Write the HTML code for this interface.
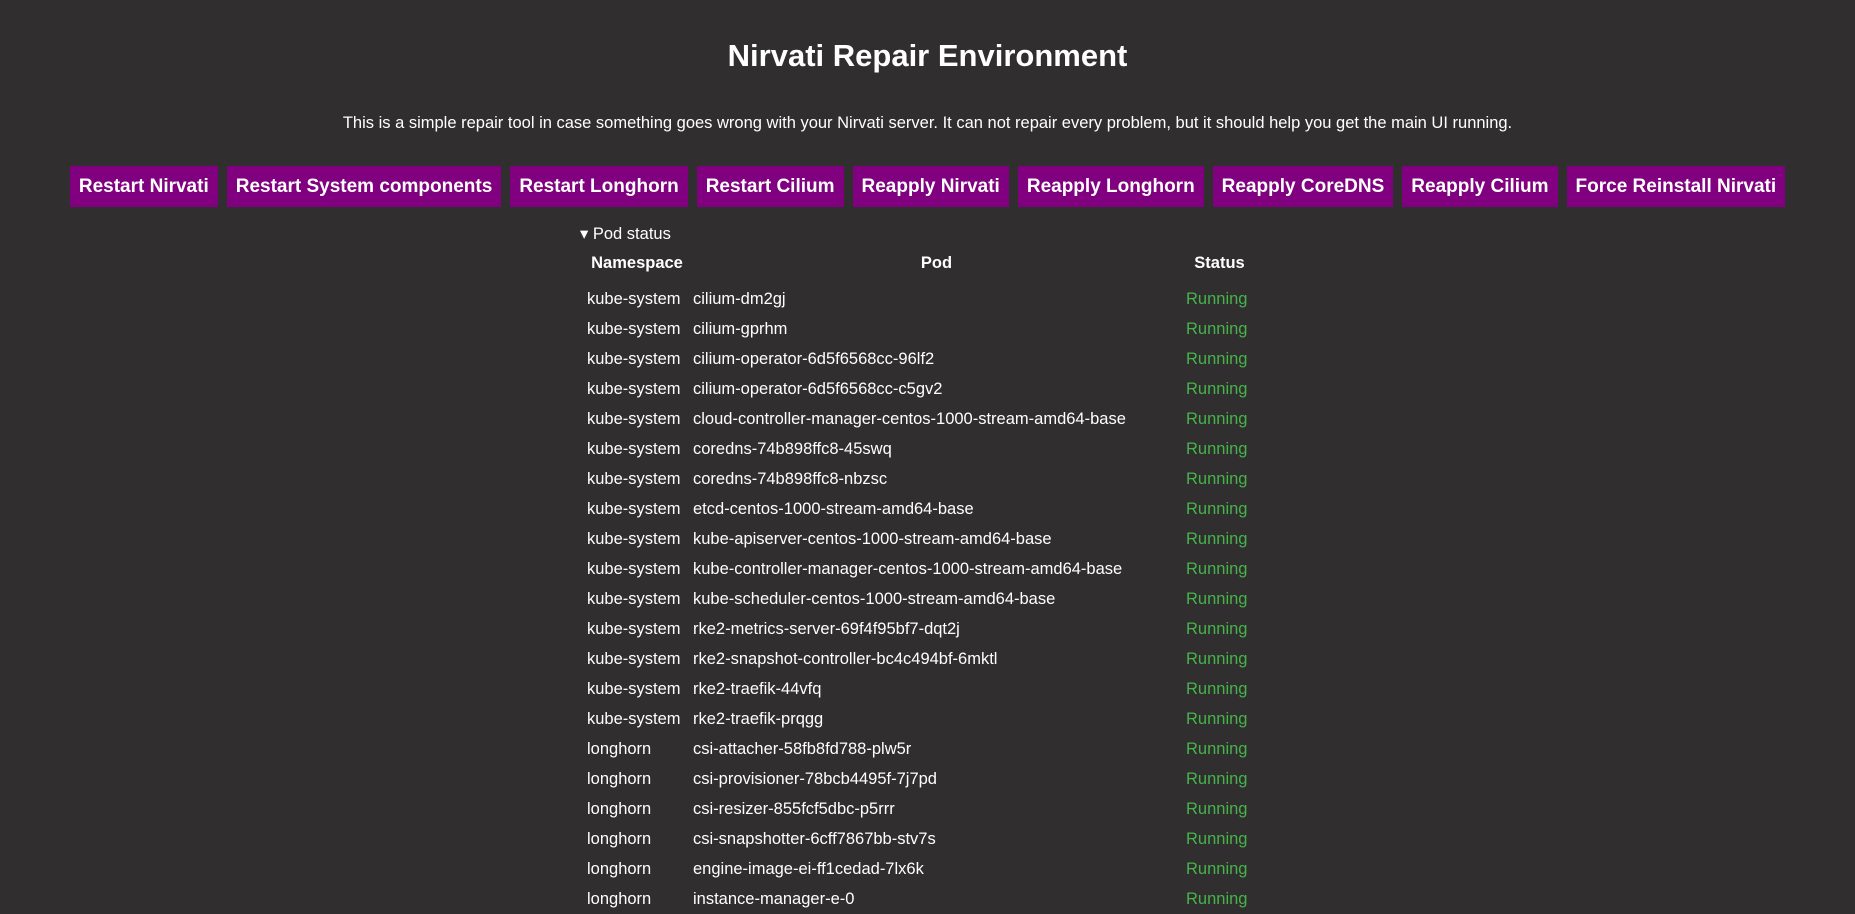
<!DOCTYPE html>
<html><head><meta charset="utf-8"><style>
html,body{margin:0;padding:0;background:#302e2f;color:#fff;font-family:"Liberation Sans",Arial,sans-serif;width:1855px;height:875px;overflow:hidden}
h1{margin:0;position:absolute;top:37px;left:0;width:1855px;text-align:center;font-size:31px;line-height:38px;font-weight:bold}
.sub{position:absolute;top:112px;left:0;width:1855px;text-align:center;font-size:16.5px;line-height:22px}
.btns{position:absolute;top:166px;left:0;width:1855px;display:flex;justify-content:center;gap:9px}
.btns span{background:#800080;color:#fff;font-weight:bold;font-size:19px;height:41px;line-height:41px;padding:0 9px;white-space:nowrap}
.sum{position:absolute;top:223px;left:580px;font-size:16.5px;line-height:22px}
table{position:absolute;top:243px;left:584px;border-collapse:collapse;table-layout:fixed;font-size:16.5px}
th{padding:0;font-weight:bold;text-align:center}
td{height:30px;line-height:30px;padding:0 3px;white-space:nowrap}
col.a{width:106px}col.b{width:493px}col.c{width:73px}
td.s{color:#46b44a;text-align:left;padding-left:3px}
</style></head><body>
<h1>Nirvati Repair Environment</h1>
<div class="sub">This is a simple repair tool in case something goes wrong with your Nirvati server. It can not repair every problem, but it should help you get the main UI running.</div>
<div class="btns"><span>Restart Nirvati</span><span>Restart System components</span><span>Restart Longhorn</span><span>Restart Cilium</span><span>Reapply Nirvati</span><span>Reapply Longhorn</span><span>Reapply CoreDNS</span><span>Reapply Cilium</span><span>Force Reinstall Nirvati</span></div>
<div class="sum">▾ Pod status</div>
<table><colgroup><col class="a"><col class="b"><col class="c"></colgroup>
<tr><th style="height:41px">Namespace</th><th>Pod</th><th>Status</th></tr>
<tr><td>kube-system</td><td>cilium-dm2gj</td><td class="s">Running</td></tr>
<tr><td>kube-system</td><td>cilium-gprhm</td><td class="s">Running</td></tr>
<tr><td>kube-system</td><td>cilium-operator-6d5f6568cc-96lf2</td><td class="s">Running</td></tr>
<tr><td>kube-system</td><td>cilium-operator-6d5f6568cc-c5gv2</td><td class="s">Running</td></tr>
<tr><td>kube-system</td><td>cloud-controller-manager-centos-1000-stream-amd64-base</td><td class="s">Running</td></tr>
<tr><td>kube-system</td><td>coredns-74b898ffc8-45swq</td><td class="s">Running</td></tr>
<tr><td>kube-system</td><td>coredns-74b898ffc8-nbzsc</td><td class="s">Running</td></tr>
<tr><td>kube-system</td><td>etcd-centos-1000-stream-amd64-base</td><td class="s">Running</td></tr>
<tr><td>kube-system</td><td>kube-apiserver-centos-1000-stream-amd64-base</td><td class="s">Running</td></tr>
<tr><td>kube-system</td><td>kube-controller-manager-centos-1000-stream-amd64-base</td><td class="s">Running</td></tr>
<tr><td>kube-system</td><td>kube-scheduler-centos-1000-stream-amd64-base</td><td class="s">Running</td></tr>
<tr><td>kube-system</td><td>rke2-metrics-server-69f4f95bf7-dqt2j</td><td class="s">Running</td></tr>
<tr><td>kube-system</td><td>rke2-snapshot-controller-bc4c494bf-6mktl</td><td class="s">Running</td></tr>
<tr><td>kube-system</td><td>rke2-traefik-44vfq</td><td class="s">Running</td></tr>
<tr><td>kube-system</td><td>rke2-traefik-prqgg</td><td class="s">Running</td></tr>
<tr><td>longhorn</td><td>csi-attacher-58fb8fd788-plw5r</td><td class="s">Running</td></tr>
<tr><td>longhorn</td><td>csi-provisioner-78bcb4495f-7j7pd</td><td class="s">Running</td></tr>
<tr><td>longhorn</td><td>csi-resizer-855fcf5dbc-p5rrr</td><td class="s">Running</td></tr>
<tr><td>longhorn</td><td>csi-snapshotter-6cff7867bb-stv7s</td><td class="s">Running</td></tr>
<tr><td>longhorn</td><td>engine-image-ei-ff1cedad-7lx6k</td><td class="s">Running</td></tr>
<tr><td>longhorn</td><td>instance-manager-e-0</td><td class="s">Running</td></tr>
</table>
</body></html>
